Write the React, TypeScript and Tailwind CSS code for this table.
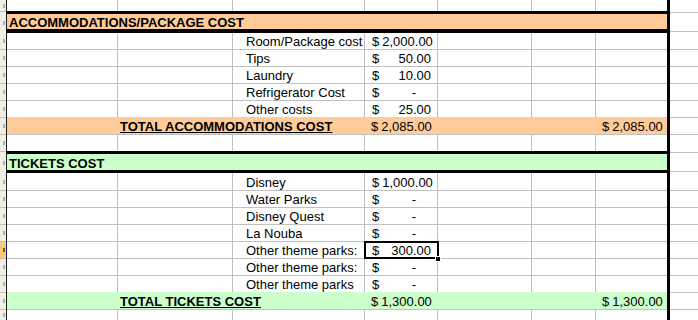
import React from "react";

type Item = { label: string; amount: string; selected?: boolean };

const accommodations: Item[] = [
  { label: "Room/Package cost", amount: "2,000.00" },
  { label: "Tips", amount: "50.00" },
  { label: "Laundry", amount: "10.00" },
  { label: "Refrigerator Cost", amount: "-" },
  { label: "Other costs", amount: "25.00" },
];

const tickets: Item[] = [
  { label: "Disney", amount: "1,000.00" },
  { label: "Water Parks", amount: "-" },
  { label: "Disney Quest", amount: "-" },
  { label: "La Nouba", amount: "-" },
  { label: "Other theme parks:", amount: "300.00", selected: true },
  { label: "Other theme parks:", amount: "-" },
  { label: "Other theme parks", amount: "-" },
];

// row header sliver at the left edge, only the tail of the row number shows
function Strip({ top, active }: { top?: boolean; active?: boolean }) {
  return (
    <div
      className={`flex w-[6px] shrink-0 items-center justify-end pr-px ${
        active ? "bg-[#f8c77c]" : "bg-[#f1efe4]"
      } ${top ? "border-t border-[#c4c1b4]" : ""}`}
    >
      <div className={`h-[4px] w-[2px] ${active ? "bg-[#7a5a20]" : "bg-[#9fb2cc]"}`} />
    </div>
  );
}

function Edge({ active }: { active?: boolean }) {
  return <div className={`w-px shrink-0 ${active ? "bg-[#0a246a]" : "bg-[#1c1c1c]"}`} />;
}

function Amount({ v }: { v: string }) {
  return (
    <div className="flex w-full items-end justify-between gap-[3px] pb-px pl-[7px] pr-[6px] leading-[13px]">
      <span>$</span>
      <span className={v === "-" ? "pr-[15px]" : ""}>{v}</span>
    </div>
  );
}

function Row({
  h = "h-[17px]",
  top = true,
  item,
}: {
  h?: string;
  top?: boolean;
  item?: Item;
}) {
  const t = top ? "border-t" : "";
  return (
    <div className={`flex ${h}`}>
      <Strip top={top} active={item?.selected} />
      <Edge active={item?.selected} />
      <div className={`w-[110px] shrink-0 border-[#c0c0c0] ${t}`} />
      <div className={`w-[115px] shrink-0 border-l border-[#c0c0c0] ${t}`} />
      <div
        className={`flex w-[132px] shrink-0 items-end whitespace-nowrap border-l border-[#c0c0c0] pb-px pl-[13px] leading-[13px] ${t}`}
      >
        {item?.label}
      </div>
      <div className={`relative flex w-[73px] shrink-0 items-end border-l border-[#c0c0c0] ${t}`}>
        {item && <Amount v={item.amount} />}
        {item?.selected && (
          <>
            <div className="absolute -bottom-px -left-px -right-[2px] -top-px z-10 border-2 border-black" />
            <div className="absolute -bottom-[4px] -right-[4px] z-20 h-[6px] w-[6px] border border-white bg-black" />
          </>
        )}
      </div>
      <div className={`w-[94px] shrink-0 border-l border-[#c0c0c0] ${t}`} />
      <div className={`w-[64px] shrink-0 border-l border-[#c0c0c0] ${t}`} />
      <div className={`w-[72px] shrink-0 border-l border-[#c0c0c0] ${t}`} />
      <div className="w-[3px] shrink-0 bg-black" />
      <div className={`flex-1 border-[#c0c0c0] ${t}`} />
    </div>
  );
}

function Header({ title, fill, bottom }: { title: string; fill: string; bottom: string }) {
  return (
    <div className="flex h-[22px]">
      <Strip top />
      <Edge />
      <div
        className={`flex w-[660px] shrink-0 items-end border-t-[3px] border-black pl-[2px] font-bold leading-[13px] ${fill} ${bottom}`}
      >
        {title}
      </div>
      <div className="w-[3px] shrink-0 bg-black" />
      <div className="flex flex-1 flex-col">
        <div className="mt-px h-[20px] border-y border-[#c0c0c0]" />
      </div>
    </div>
  );
}

function Total({ title, total, fill }: { title: string; total: string; fill: string }) {
  return (
    <div className="flex h-[17px]">
      <Strip top />
      <Edge />
      <div className={`flex w-[660px] shrink-0 items-end ${fill}`}>
        <div className="w-[110px] shrink-0" />
        <div className="w-[247px] shrink-0 whitespace-nowrap pb-px pl-[3px] font-bold leading-[13px] underline">
          {title}
        </div>
        <div className="w-[73px] shrink-0">
          <Amount v={total} />
        </div>
        <div className="w-[94px] shrink-0" />
        <div className="w-[64px] shrink-0" />
        <div className="w-[72px] shrink-0">
          <Amount v={total} />
        </div>
      </div>
      <div className="w-[3px] shrink-0 bg-black" />
      <div className="flex-1 border-t border-[#c0c0c0]" />
    </div>
  );
}

export default function App() {
  return (
    <div className="h-[320px] w-[698px] overflow-hidden bg-white font-['Liberation_Sans',Arial,sans-serif] text-[13px] text-black">
      <Row h="h-[11px]" top={false} />
      <Header title="ACCOMMODATIONS/PACKAGE COST" fill="bg-[#ffcc99]" bottom="border-b-[4px]" />
      {accommodations.map((item, i) => (
        <Row key={i} item={item} top={i > 0} h={i === 0 ? "h-[16px]" : "h-[17px]"} />
      ))}
      <Total title="TOTAL ACCOMMODATIONS COST" total="2,085.00" fill="bg-[#ffcc99]" />
      <Row />
      <Header title="TICKETS COST" fill="bg-[#ccffcc]" bottom="border-b-[3px]" />
      {tickets.map((item, i) => (
        <Row key={i} item={item} top={i > 0} />
      ))}
      <Total title="TOTAL TICKETS COST" total="1,300.00" fill="bg-[#ccffcc]" />
      <Row h="h-[11px]" />
    </div>
  );
}
